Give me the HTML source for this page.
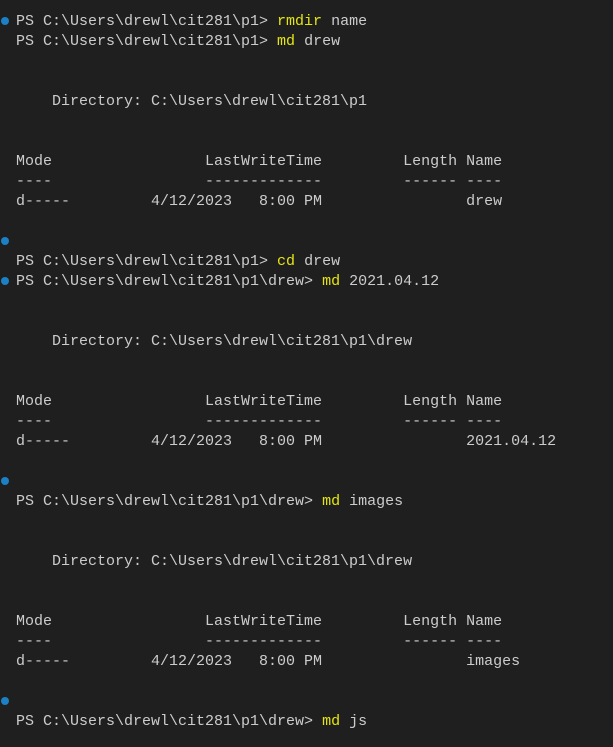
<!DOCTYPE html>
<html><head><style>
html,body{margin:0;padding:0;background:#1f1f1f;width:613px;height:747px;overflow:hidden}
pre{margin:0;position:absolute;left:16px;top:12px;font-family:"Liberation Mono",monospace;font-size:15px;line-height:20px;color:#cccccc}
.y{color:#e5e510}
.d{position:absolute;left:1px;width:8px;height:8px;border-radius:50%;background:#1b80c4}
</style></head><body>
<div class="d" style="top:17px"></div>
<div class="d" style="top:237px"></div>
<div class="d" style="top:277px"></div>
<div class="d" style="top:477px"></div>
<div class="d" style="top:697px"></div>
<pre>PS C:\Users\drewl\cit281\p1&gt; <span class="y">rmdir</span> name
PS C:\Users\drewl\cit281\p1&gt; <span class="y">md</span> drew


    Directory: C:\Users\drewl\cit281\p1


Mode                 LastWriteTime         Length Name
----                 -------------         ------ ----
d-----         4/12/2023   8:00 PM                drew


PS C:\Users\drewl\cit281\p1&gt; <span class="y">cd</span> drew
PS C:\Users\drewl\cit281\p1\drew&gt; <span class="y">md</span> 2021.04.12


    Directory: C:\Users\drewl\cit281\p1\drew


Mode                 LastWriteTime         Length Name
----                 -------------         ------ ----
d-----         4/12/2023   8:00 PM                2021.04.12


PS C:\Users\drewl\cit281\p1\drew&gt; <span class="y">md</span> images


    Directory: C:\Users\drewl\cit281\p1\drew


Mode                 LastWriteTime         Length Name
----                 -------------         ------ ----
d-----         4/12/2023   8:00 PM                images


PS C:\Users\drewl\cit281\p1\drew&gt; <span class="y">md</span> js</pre>
</body></html>
